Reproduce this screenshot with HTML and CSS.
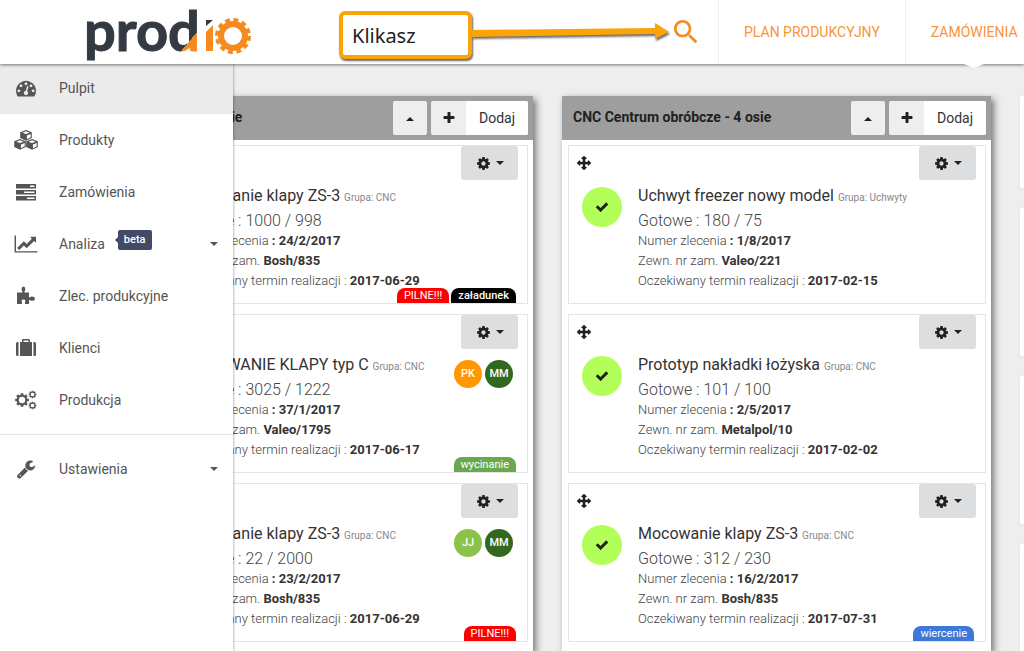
FILE: index.html
```html
<!DOCTYPE html>
<html lang="pl">
<head>
<meta charset="utf-8">
<title>Prodio</title>
<link rel="stylesheet" href="styles.css">
</head>
<body>
<svg class="sprite" aria-hidden="true">
  <symbol id="check" viewBox="0 0 1792 1792"><path d="M1671 566q0 40-28 68l-724 724-136 136q-28 28-68 28t-68-28l-136-136-362-362q-28-28-28-68t28-68l136-136q28-28 68-28t68 28l294 295 656-657q28-28 68-28t68 28l136 136q28 28 28 68z"/></symbol>
  <symbol id="plus" viewBox="0 0 1792 1792"><path d="M1600 736v192q0 40-28 68t-68 28h-416v416q0 40-28 68t-68 28h-192q-40 0-68-28t-28-68v-416h-416q-40 0-68-28t-28-68v-192q0-40 28-68t68-28h416v-416q0-40 28-68t68-28h192q40 0 68 28t28 68v416h416q40 0 68 28t28 68z"/></symbol>
  <symbol id="cog" viewBox="0 0 1792 1792"><path d="M1152 896q0-106-75-181t-181-75-181 75-75 181 75 181 181 75 181-75 75-181zm512-109v222q0 12-8 23t-20 13l-185 28q-19 54-39 91 35 50 107 138 10 12 10 25t-9 23q-27 37-99 108t-94 71q-12 0-26-9l-138-108q-44 23-91 38-16 136-29 186-7 28-36 28h-222q-14 0-24.5-8.5t-11.5-21.5l-28-184q-49-16-90-37l-141 107q-10 9-25 9-14 0-25-11-126-114-165-168-7-10-7-23 0-12 8-23 15-21 51-66.5t54-70.5q-27-50-41-99l-183-27q-13-2-21-12.5t-8-23.5v-222q0-12 8-23t19-13l186-28q14-46 39-92-40-57-107-138-10-12-10-24 0-10 9-23 26-36 98.500-107.500t94.500-71.500q13 0 26 10l138 107q44-23 91-38 16-136 29-186 7-28 36-28h222q14 0 24.500 8.500t11.500 21.500l28 184q49 16 90 37l142-107q9-9 24-9 13 0 25 10 129 119 165 170 7 8 7 22 0 12-8 23-15 21-51 66.500t-54 70.500q26 50 41 98l183 28q13 2 21 12.500t8 23.500z"/></symbol>
  <symbol id="move" viewBox="0 0 1792 1792"><path d="M1792 896q0 26-19 45l-256 256q-19 19-45 19t-45-19-19-45v-128h-384v384h128q26 0 45 19t19 45-19 45l-256 256q-19 19-45 19t-45-19l-256-256q-19-19-19-45t19-45 45-19h128v-384h-384v128q0 26-19 45t-45 19-45-19l-256-256q-19-19-19-45t19-45l256-256q19-19 45-19t45 19 19 45v128h384v-384h-128q-26 0-45-19t-19-45 19-45l256-256q19-19 45-19t45 19l256 256q19 19 19 45t-19 45-45 19h-128v384h384v-128q0-26 19-45t45-19 45 19l256 256q19 19 19 45z"/></symbol>
  <symbol id="down" viewBox="0 0 8 4"><path d="M0 0h8L4 4z"/></symbol>
  <symbol id="up" viewBox="0 0 8 4"><path d="M0 4h8L4 0z"/></symbol>
</svg>

<header class="topbar">
  <a class="logo" href="#" aria-label="prodio">
    <svg width="165" height="54" viewBox="0 0 165 54">
      <defs>
        <linearGradient id="split" gradientUnits="userSpaceOnUse" x1="81" y1="8" x2="129" y2="48">
          <stop offset=".5" stop-color="#343a42"/><stop offset=".5" stop-color="#f58a1f"/>
        </linearGradient>
      </defs>
      <text class="logo-text" x="-3" y="41" fill="url(#split)" stroke="url(#split)">prod</text>
      <path d="M119 41V22l7-7v26z" fill="#f58a1f"/>
      <path d="M119 10h7l-7 6z" fill="#343a42"/>
      <g fill="none" stroke="#f58a1f">
        <circle cx="146" cy="26" r="12" stroke-width="6"/>
        <circle cx="146" cy="26" r="16" stroke-width="4" stroke-dasharray="4.800 3.578"/>
      </g>
    </svg>
  </a>
  <div class="callout">Klikasz</div>
  <svg class="arrow" width="198" height="24" viewBox="0 0 198 24" aria-hidden="true"><path d="M0 8L183 6V1L197 10L183 17V12L0 15z" fill="#fba40a"/></svg>
  <button class="search" aria-label="Szukaj"><svg width="32" height="32" viewBox="0 0 24 24"><path d="M15.500 14h-.79l-.28-.27C15.410 12.590 16 11.110 16 9.500 16 5.910 13.090 3 9.500 3S3 5.910 3 9.500 5.910 16 9.500 16c1.610 0 3.090-.59 4.230-1.570l.27.28v.79l5 4.990L20.490 19l-4.990-5zm-6 0C7.010 14 5 11.990 5 9.500S7.010 5 9.500 5 14 7.010 14 9.500 11.990 14 9.500 14z"/></svg></button>
  <nav class="tabs">
    <a class="tab" href="#">PLAN PRODUKCYJNY</a>
    <a class="tab current" href="#">ZAMÓWIENIA</a>
  </nav>
</header>

<aside class="drawer">
  <ul class="menu">
    <li><a class="item active" href="#"><svg class="ico" viewBox="0 0 1792 1792"><path d="M384 1152q0-53-37.500-90.500t-90.500-37.500-90.500 37.500-37.500 90.500 37.500 90.500 90.500 37.500 90.500-37.500 37.500-90.500zm192-448q0-53-37.500-90.500t-90.500-37.500-90.500 37.500-37.500 90.500 37.500 90.500 90.500 37.500 90.500-37.500 37.500-90.500zm428 481l101-382q6-26-7.500-48.500t-38.500-29.500-48 6.500-30 39.500l-101 382q-60 5-107 43.500t-63 98.500q-20 77 20 146t117 89 146-20 89-117q16-60-6-117t-72-91zm660-33q0-53-37.500-90.500t-90.500-37.500-90.500 37.500-37.500 90.500 37.500 90.500 90.500 37.500 90.500-37.500 37.500-90.500zm-640-640q0-53-37.500-90.500t-90.500-37.500-90.500 37.500-37.500 90.500 37.500 90.500 90.500 37.500 90.500-37.500 37.500-90.500zm448 192q0-53-37.500-90.500t-90.500-37.500-90.500 37.500-37.500 90.500 37.500 90.500 90.500 37.500 90.500-37.500 37.500-90.500zm320 448q0 261-141 483-19 29-54 29h-1402q-35 0-54-29-141-221-141-483 0-182 71-348t191-286 286-191 348-71 348 71 286 191 191 286 71 348z"/></svg>Pulpit</a></li>
    <li><a class="item" href="#"><svg class="ico wide" viewBox="0 0 24 20"><g id="cube"><path d="M12 0L17.800 2.300V8L12 10.700 6.200 8V2.300z"/><path d="M12 1.300l3.600 1.400L12 4.100 8.400 2.700zM12.900 5.500L16.700 4v3.300l-3.800 1.900z" fill="#fff"/></g><use href="#cube" x="-6" y="9"/><use href="#cube" x="6" y="9"/></svg>Produkty</a></li>
    <li><a class="item" href="#"><svg class="ico" viewBox="0 0 20 20"><path d="M0 2h20v4.500H0zM0 8h20v4.500H0zM0 14h20v4.500H0z"/><path d="M14 3.500h4.500V5H14zM8 9.500h10.500V11H8zM11 15.500h7.500V17H11z" fill="#fff"/></svg>Zamówienia</a></li>
    <li><a class="item" href="#"><svg class="ico wide" viewBox="0 0 2048 1792"><path d="M2048 1536v128h-2048v-1536h128v1408h1920zm-128-1248v435q0 21-19.500 29.500t-35.500-7.500l-121-121-633 633q-10 10-23 10t-23-10l-233-233-416 416-192-192 585-585q10-10 23-10t23 10l233 233 464-464-121-121q-16-16-7.500-35.500t29.500-19.500h435q14 0 23 9t9 23z"/></svg>Analiza<span class="beta">beta</span><svg class="caret"><use href="#down"/></svg></a></li>
    <li><a class="item" href="#"><svg class="ico" viewBox="0 0 20 20"><path d="M1 6.500h5c.8 0 .6-.9.100-1.600-.9-1.300-.5-1.600-.3-2.500C6 1.300 6.600.5 7.500.5s1.600.8 1.600 1.900c.1.900.5 1.200-.3 2.500-.5.700-.7 1.600.1 1.600H13v4.300c0 .9.900.7 1.700.2 1-.7 1.600-.4 2.300-.3 1.200.2 2 .9 2 2s-.8 1.900-2 2c-.8.1-1.300.4-2.300-.3-.8-.5-1.700-.7-1.700.2v3.400H9v-2c.8-1.200.5-2.600-1.500-2.600S5.200 14.800 6 16v2H1z"/></svg>Zlec. produkcyjne</a></li>
    <li><a class="item" href="#"><svg class="ico" viewBox="0 0 20 20"><path d="M0 5.500Q0 4 1.500 4H2.500v14H1.500Q0 18 0 16.500zM17.500 4h1q1.500 0 1.500 1.500v11q0 1.500-1.500 1.500h-1zM4 4h2V2.200Q6 1 7.200 1h5.600Q14 1 14 2.200V4h2v14H4zM7.500 2.500V4h5V2.500z" fill-rule="evenodd"/></svg>Klienci</a></li>
    <li><a class="item" href="#"><svg class="ico wide" viewBox="0 0 24 20"><use href="#cog" x="0" y="2" width="16" height="16"/><circle cx="8" cy="10" r="3.200" fill="#fff"/><use href="#cog" x="14" y="0" width="9" height="9"/><circle cx="18.500" cy="4.500" r="1.800" fill="#fff"/><use href="#cog" x="14" y="11" width="9" height="9"/><circle cx="18.500" cy="15.500" r="1.800" fill="#fff"/></svg>Produkcja</a></li>
  </ul>
  <ul class="menu">
    <li><a class="item" href="#"><svg class="ico" viewBox="0 0 1792 1792"><path d="M448 1472q0-26-19-45t-45-19-45 19-19 45 19 45 45 19 45-19 19-45zm644-420l-682 682q-37 37-90 37-52 0-91-37l-106-108q-38-36-38-90 0-53 38-91l681-681q39 98 114.500 173.500t173.500 114.500zm634-435q0 39-23 106-47 134-164.500 217.500t-258.500 83.500q-185 0-316.500-131.500t-131.500-316.500 131.500-316.500 316.500-131.500q58 0 121.500 16.500t107.500 46.500q16 11 16 28t-16 28l-293 169v224l193 107q5-3 79-48.500t135.500-81 70.500-35.500q15 0 23.500 10t8.500 25z"/></svg>Ustawienia<svg class="caret"><use href="#down"/></svg></a></li>
  </ul>
</aside>

<main class="board">
  <section class="column">
    <div class="column-head">
      <h2>CNC Centrum 3 osie</h2>
      <button class="fold" aria-label="Zwiń"><svg class="caret"><use href="#up"/></svg></button>
      <button class="add"><span class="add-icon"><svg><use href="#plus"/></svg></span><span class="add-text">Dodaj</span></button>
    </div>
    <div class="cards">
      <article class="card">
        <div class="card-top"><svg class="move"><use href="#move"/></svg><button class="options" aria-label="Opcje"><svg class="gear"><use href="#cog"/></svg><svg class="caret"><use href="#down"/></svg></button></div>
        <div class="card-body">
          <span class="status"><svg><use href="#check"/></svg></span>
          <div class="info"><h3>Mocowanie klapy ZS-3 <small>Grupa: CNC</small></h3><p class="done">Gotowe : 1000 / 998</p><p>Numer zlecenia <b>: 24/2/2017</b></p><p>Zewn. nr zam. <b>Bosh/835</b></p><p>Oczekiwany termin realizacji : <b>2017-06-29</b></p></div>
        </div>
        <div class="tags"><span class="tag red">PILNE!!!</span><span class="tag black">załadunek</span></div>
      </article>
      <article class="card">
        <div class="card-top"><svg class="move"><use href="#move"/></svg><button class="options" aria-label="Opcje"><svg class="gear"><use href="#cog"/></svg><svg class="caret"><use href="#down"/></svg></button></div>
        <div class="card-body">
          <span class="status"><svg><use href="#check"/></svg></span>
          <div class="info"><h3>MOCOWANIE KLAPY typ C <small>Grupa: CNC</small></h3><p class="done">Gotowe : 3025 / 1222</p><p>Numer zlecenia <b>: 37/1/2017</b></p><p>Zewn. nr zam. <b>Valeo/1795</b></p><p>Oczekiwany termin realizacji : <b>2017-06-17</b></p></div>
          <div class="people"><span class="avatar orange">PK</span><span class="avatar forest">MM</span></div>
        </div>
        <div class="tags"><span class="tag green">wycinanie</span></div>
      </article>
      <article class="card">
        <div class="card-top"><svg class="move"><use href="#move"/></svg><button class="options" aria-label="Opcje"><svg class="gear"><use href="#cog"/></svg><svg class="caret"><use href="#down"/></svg></button></div>
        <div class="card-body">
          <span class="status"><svg><use href="#check"/></svg></span>
          <div class="info"><h3>Mocowanie klapy ZS-3 <small>Grupa: CNC</small></h3><p class="done">Gotowe : 22 / 2000</p><p>Numer zlecenia <b>: 23/2/2017</b></p><p>Zewn. nr zam. <b>Bosh/835</b></p><p>Oczekiwany termin realizacji : <b>2017-06-29</b></p></div>
          <div class="people"><span class="avatar lime">JJ</span><span class="avatar forest">MM</span></div>
        </div>
        <div class="tags"><span class="tag red">PILNE!!!</span></div>
      </article>
    </div>
  </section>

  <section class="column">
    <div class="column-head">
      <h2>CNC Centrum obróbcze - 4 osie</h2>
      <button class="fold" aria-label="Zwiń"><svg class="caret"><use href="#up"/></svg></button>
      <button class="add"><span class="add-icon"><svg><use href="#plus"/></svg></span><span class="add-text">Dodaj</span></button>
    </div>
    <div class="cards">
      <article class="card">
        <div class="card-top"><svg class="move"><use href="#move"/></svg><button class="options" aria-label="Opcje"><svg class="gear"><use href="#cog"/></svg><svg class="caret"><use href="#down"/></svg></button></div>
        <div class="card-body">
          <span class="status"><svg><use href="#check"/></svg></span>
          <div class="info"><h3>Uchwyt freezer nowy model <small>Grupa: Uchwyty</small></h3><p class="done">Gotowe : 180 / 75</p><p>Numer zlecenia <b>: 1/8/2017</b></p><p>Zewn. nr zam. <b>Valeo/221</b></p><p>Oczekiwany termin realizacji : <b>2017-02-15</b></p></div>
        </div>
      </article>
      <article class="card">
        <div class="card-top"><svg class="move"><use href="#move"/></svg><button class="options" aria-label="Opcje"><svg class="gear"><use href="#cog"/></svg><svg class="caret"><use href="#down"/></svg></button></div>
        <div class="card-body">
          <span class="status"><svg><use href="#check"/></svg></span>
          <div class="info"><h3>Prototyp nakładki łożyska <small>Grupa: CNC</small></h3><p class="done">Gotowe : 101 / 100</p><p>Numer zlecenia <b>: 2/5/2017</b></p><p>Zewn. nr zam. <b>Metalpol/10</b></p><p>Oczekiwany termin realizacji : <b>2017-02-02</b></p></div>
        </div>
      </article>
      <article class="card">
        <div class="card-top"><svg class="move"><use href="#move"/></svg><button class="options" aria-label="Opcje"><svg class="gear"><use href="#cog"/></svg><svg class="caret"><use href="#down"/></svg></button></div>
        <div class="card-body">
          <span class="status"><svg><use href="#check"/></svg></span>
          <div class="info"><h3>Mocowanie klapy ZS-3 <small>Grupa: CNC</small></h3><p class="done">Gotowe : 312 / 230</p><p>Numer zlecenia <b>: 16/2/2017</b></p><p>Zewn. nr zam. <b>Bosh/835</b></p><p>Oczekiwany termin realizacji : <b>2017-07-31</b></p></div>
        </div>
        <div class="tags"><span class="tag blue">wiercenie</span></div>
      </article>
    </div>
  </section>

  <section class="side">
    <div class="panel short"></div>
    <div class="panel"></div>
    <div class="panel"></div>
    <div class="panel"></div>
  </section>
</main>
</body>
</html>
```

FILE: styles.css
```css
* { box-sizing: border-box; }
body {
  margin: 0;
  height: 100vh;
  overflow: hidden;
  position: relative;
  background: #eeeeee;
  color: #333;
  font-family: Roboto, "Liberation Sans", sans-serif;
  font-size: 14px;
}
h2, h3, p, ul { margin: 0; padding: 0; }
button { border: 0; padding: 0; font: inherit; color: inherit; cursor: pointer; }
a { color: inherit; text-decoration: none; }
.sprite { display: none; }

.topbar {
  position: relative;
  z-index: 3;
  display: flex;
  align-items: center;
  height: 64px;
  padding-left: 87px;
  background: #fff;
  box-shadow: 0 1px 3px rgba(0, 0, 0, .5);
}
.topbar > * { flex: none; }
.logo { height: 54px; margin-top: 10px; align-self: flex-start; }
.logo svg { display: block; overflow: visible; }
.logo-text { font-family: Lato, sans-serif; font-size: 56px; font-weight: 700; stroke-width: 1px; }
.callout {
  margin: 6px 0 0 87px;
  width: 133px;
  height: 48px;
  padding-left: 9px;
  border: 4px solid #fba40a;
  border-radius: 6px;
  background: #fff;
  box-shadow: 1px 2px 2px rgba(0, 0, 0, .6);
  color: #222;
  font: 20px/42px "Noto Sans", sans-serif;
}
.arrow { margin-top: 4px; filter: drop-shadow(1px 2px 1px rgba(0, 0, 0, .6)); }
.search { display: flex; width: 48px; background: none; fill: #f58a1f; }
.tabs { display: flex; align-self: stretch; }
.tab {
  position: relative;
  display: flex;
  align-items: center;
  padding: 0 25px;
  border-left: 1px solid #eeeeee;
  color: #f7953a;
  white-space: nowrap;
}
.current::after {
  content: "";
  position: absolute;
  top: 100%;
  left: 50%;
  margin-left: -10px;
  border: 10px solid transparent;
  border-top: 4px solid #fff;
  border-bottom: 0;
}

.drawer {
  position: absolute;
  z-index: 2;
  top: 62px;
  bottom: 0;
  left: 0;
  width: 233px;
  background: #fff;
  box-shadow: 1px 0 2px rgba(0, 0, 0, .25);
}
.menu { list-style: none; }
.menu + .menu { margin-top: 8px; padding-top: 8px; border-top: 1px solid #e4e4e4; }
.item { display: flex; align-items: center; height: 52px; padding: 0 15px 0 12px; color: #555; fill: #555; }
.active { background: #ebebeb; }
.ico { width: 20px; height: 20px; margin: 0 23px 0 4px; flex: none; }
.ico.wide { width: 24px; margin: 0 21px 0 2px; }
.caret { width: 8px; height: 4px; flex: none; }
.item .caret { margin-left: auto; }
.beta {
  position: relative;
  margin: 0 0 8px 13px;
  padding: 0 6px;
  border-radius: 2px;
  background: #434a68;
  color: #fff;
  font-size: 11px;
  font-weight: 500;
  line-height: 20px;
}
.beta::before {
  content: "";
  position: absolute;
  right: 100%;
  top: 7px;
  border: 3px solid transparent;
  border-right-color: #434a68;
  border-left: 0;
}

.board { display: flex; gap: 29px; height: calc(100vh - 64px); padding: 32px 0 0 104px; }
.column {
  flex: 0 0 429px;
  min-height: 100%;
  background: #fff;
  box-shadow: 3px 3px 7px rgba(0, 0, 0, .5);
}
.column-head { display: flex; height: 44px; padding: 5px 5px 0 11px; background: #9e9e9e; }
h2 { flex: 1; color: #212121; font-size: 14px; font-weight: 700; line-height: 32px; }
.fold, .add { height: 34px; border-radius: 2px; background: #eeeeee; overflow: hidden; }
.fold { display: flex; align-items: center; justify-content: center; width: 34px; padding-top: 2px; margin-right: 4px; fill: #212121; }
.add { display: flex; width: 97px; color: #333; }
.add-icon { display: flex; align-items: center; justify-content: center; width: 35px; height: 34px; }
.add-icon svg { width: 14px; height: 14px; fill: #212121; }
.add-text { flex: 1; background: #fff; line-height: 34px; }

.cards { display: flex; flex-direction: column; gap: 10px; padding: 5px 5px 0 6px; }
.card { position: relative; height: 159px; border: 1px solid #e4e4e4; }
.card-top { display: flex; justify-content: space-between; height: 38px; padding: 0 9px 0 8px; }
.move { width: 14px; height: 14px; margin-top: 10px; fill: #212121; stroke: #212121; stroke-width: 60px; overflow: visible; }
.options {
  display: flex;
  align-items: center;
  justify-content: center;
  gap: 5px;
  width: 57px;
  height: 34px;
  border-radius: 3px;
  background: #dddee0;
  fill: #212121;
}
.gear { width: 15px; height: 15px; }
.card-body { display: flex; align-items: flex-start; padding: 0 14px 0 13px; }
.status {
  display: flex;
  align-items: center;
  justify-content: center;
  width: 40px;
  height: 40px;
  margin: 3px 16px 0 0;
  border-radius: 50%;
  background: #b2ff59;
}
.status svg { width: 14px; height: 14px; fill: #212121; }
.info { flex: 1; font-size: 13px; font-weight: 300; line-height: 20px; color: #444; white-space: nowrap; }
h3 { font-size: 16px; font-weight: 400; line-height: 24px; color: #333; }
small { font-size: 10px; color: #888; }
.done { font-size: 16px; line-height: 21px; }
b { font-weight: 700; color: #333; }
.people { display: flex; gap: 3px; margin-top: 7px; }
.avatar {
  width: 28px;
  height: 28px;
  border-radius: 50%;
  color: #fff;
  font-size: 11px;
  font-weight: 500;
  line-height: 28px;
  text-align: center;
}
.orange { background: #ff9800; }
.forest { background: #33691e; }
.lime { background: #8bc34a; }
.tags { position: absolute; right: 11px; bottom: 0; display: flex; gap: 2px; }
.tag {
  padding: 0 7px;
  border-radius: 8px 8px 0 0;
  color: #fff;
  font-size: 11px;
  line-height: 15px;
}
.red { background: #f00; }
.black { background: #000; font-weight: 500; }
.green { background: #6aa84f; }
.blue { background: #3c78d8; }

.side { display: flex; flex: 0 0 429px; flex-direction: column; gap: 20px; }
.panel { flex: none; height: 148px; border-radius: 2px; background: #fff; box-shadow: 0 0 2px rgba(0, 0, 0, .1); }
.short { height: 92px; }
```
